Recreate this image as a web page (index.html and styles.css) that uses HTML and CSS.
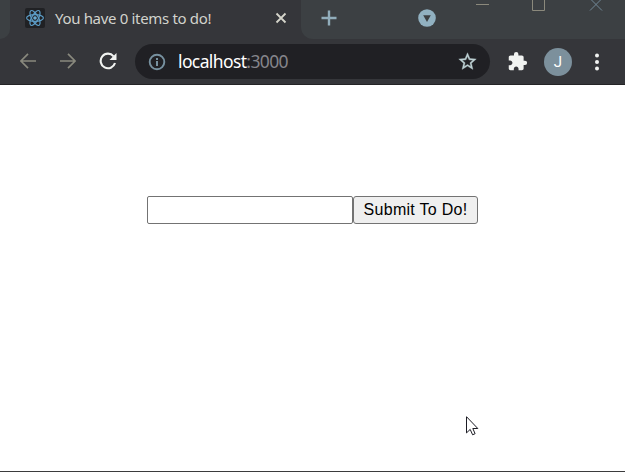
FILE: index.html
```html
<!DOCTYPE html>
<html lang="en">
<head>
<meta charset="utf-8">
<title>You have 0 items to do!</title>
<link rel="stylesheet" href="styles.css">
</head>
<body>
<div class="window">
  <header class="strip">
    <div class="strip-left"></div>
    <div class="tab">
      <svg class="favicon" width="20" height="20" viewBox="0 0 20 20">
        <rect width="20" height="20" rx="2" fill="#202124"/>
        <g fill="none" stroke="#5c9dc7" stroke-width="1.2">
          <ellipse cx="10" cy="10" rx="8.4" ry="3.3"/>
          <ellipse cx="10" cy="10" rx="8.4" ry="3.3" transform="rotate(60 10 10)"/>
          <ellipse cx="10" cy="10" rx="8.4" ry="3.3" transform="rotate(120 10 10)"/>
        </g>
        <circle cx="10" cy="10" r="1.8" fill="#68a9d0"/>
      </svg>
      <span class="tab-title">You have 0 items to do!</span>
      <svg class="tab-close" width="12" height="12" viewBox="0 0 12 12"><path d="M1.5 1.5l9 9M10.5 1.5l-9 9" stroke="#d5d5cb" stroke-width="1.8"/></svg>
    </div>
    <div class="strip-right">
      <svg class="plus" width="16" height="16" viewBox="0 0 16 16"><path d="M8 .5v15M.5 8h15" stroke="#91adbb" stroke-width="2.4"/></svg>
      <svg class="search" width="18" height="18" viewBox="0 0 18 18"><circle cx="9" cy="9" r="8.8" fill="#91b1c1"/><path d="M5.2 6.2h7.6L9 12.9z" fill="#3c4043"/></svg>
      <svg class="controls" width="128" height="12" viewBox="0 0 128 12" fill="none">
        <path d="M0 4.5h13" stroke="#8b897c"/>
        <path d="M56.500 -1.500h12v12h-12z" stroke="#8b897c"/>
        <path d="M114 -1.500l12 12M126 -1.500l-12 12" stroke="#708797"/>
      </svg>
    </div>
  </header>
  <nav class="toolbar">
    <svg class="back" width="16" height="16" viewBox="0 0 16 16"><path d="M16 8H1.200M8 .800L.900 8 8 15.200" fill="none" stroke="#89897d" stroke-width="1.700"/></svg>
    <svg class="forward" width="16" height="16" viewBox="0 0 16 16"><path d="M0 8h14.800M8 .800L15.100 8 8 15.200" fill="none" stroke="#89897d" stroke-width="1.700"/></svg>
    <svg class="reload" width="18" height="18" viewBox="0 0 18 18"><path d="M14.600 4.300A7.300 7.300 0 1 0 16 11" fill="none" stroke="#f1f3f1" stroke-width="2.100"/><path d="M17.500 1v7h-7z" fill="#f1f3f1"/></svg>
    <div class="omnibox">
      <svg class="info" width="18" height="18" viewBox="0 0 18 18"><circle cx="9" cy="9" r="7.300" fill="none" stroke="#7791a0" stroke-width="1.900"/><path d="M9 8v5M9 5v2" stroke="#7791a0" stroke-width="2"/></svg>
      <span class="url"><span class="host">localhost</span><span class="port">:3000</span></span>
      <svg class="star" width="21" height="21" viewBox="0 0 24 24"><path d="M22 9.240l-7.190-.620L12 2 9.190 8.630 2 9.240l5.460 4.730L5.820 21 12 17.270 18.180 21l-1.630-7.030L22 9.240zM12 15.400l-3.760 2.270 1-4.280-3.320-2.880 4.380-.380L12 6.100l1.710 4.040 4.380.380-3.320 2.880 1 4.280L12 15.400z" fill="#bdd0d3" stroke="#bdd0d3" stroke-width=".4"/></svg>
    </div>
    <svg class="puzzle" width="21" height="21" viewBox="0 0 24 24"><path d="M20.500 11H19V7c0-1.100-.900-2-2-2h-4V3.500a2.500 2.500 0 0 0-5 0V5H4c-1.100 0-1.990.900-1.990 2v3.800H3.500c1.490 0 2.700 1.210 2.700 2.700s-1.210 2.700-2.700 2.700H2V20c0 1.100.900 2 2 2h3.800v-1.500c0-1.490 1.210-2.700 2.700-2.700s2.700 1.210 2.700 2.700V22H17c1.100 0 2-.900 2-2v-4h1.500a2.500 2.500 0 0 0 0-5z" fill="#f1f3f1"/></svg>
    <span class="avatar">J</span>
    <svg class="dots" width="4" height="18" viewBox="0 0 4 18" fill="#f1f3f1"><circle cx="2" cy="2.500" r="2"/><circle cx="2" cy="9" r="2"/><circle cx="2" cy="15.500" r="2"/></svg>
  </nav>
  <main class="page">
    <form class="todo">
      <input class="field" type="text" aria-label="To do">
      <button class="submit" type="button">Submit To Do!</button>
    </form>
  </main>
</div>
<svg class="cursor" width="13" height="20" viewBox="0 0 13 20"><path d="M.5 .7v16.200l3.700-3.500 2.400 5.400 2.500-1.100-2.300-5.200h5z" fill="#fff" stroke="#1c1c24" stroke-width="1"/></svg>
</body>
</html>
```
FILE: styles.css
```css
* { box-sizing: border-box; }
body { margin: 0; background: #fff; overflow: hidden; }
svg { display: block; flex: none; }
.window { height: 472px; display: flex; flex-direction: column; border-bottom: 1px solid #3b3b3d; }
.strip { height: 39px; display: flex; flex: none; background: #35363a; }
.strip-left { width: 10px; background: #3c4043; border-bottom-right-radius: 10px; }
.tab { width: 291px; height: 36px; display: flex; align-items: center; padding: 0 14px 0 15px; }
.tab-title { flex: 1; margin-left: 10px; padding-bottom: 1px; font: 15px/20px "Noto Sans", sans-serif; letter-spacing: -.33px; color: #d2d3cd; white-space: nowrap; }
.strip-right { flex: 1; display: flex; align-items: flex-start; background: #3c4043; border-bottom-left-radius: 12px; }
.plus { margin: 10px 0 0 20px; }
.search { margin: 9px 0 0 81px; }
.controls { margin-left: 40px; }
.toolbar { height: 46px; flex: none; display: flex; align-items: center; background: #35363a; border-bottom: 1px solid #242426; padding-left: 20px; }
.back, .forward, .reload { margin-bottom: 1px; }
.forward { margin-left: 24px; }
.reload { margin-left: 23px; }
.omnibox { width: 355px; height: 35px; margin-left: 18px; display: flex; align-items: center; border-radius: 18px; background: #202024; padding: 0 12px 0 13px; }
.url { flex: 1; margin-left: 12px; padding-bottom: 1px; font: 17.5px/24px "Noto Sans", sans-serif; letter-spacing: -.62px; white-space: nowrap; }
.host { color: #fff; }
.port { color: #85858b; }
.puzzle { margin-left: 17px; }
.avatar { width: 28px; height: 28px; margin-left: 16px; border-radius: 50%; background: #7c909c; color: #fff; font: 15px/28px Roboto, sans-serif; text-align: center; }
.dots { margin-left: 23px; }
.page { flex: 1; display: flex; justify-content: center; align-items: flex-start; padding-top: 111px; }
.todo { display: flex; margin: 0; }
.field { width: 206px; height: 28px; border: 1px solid #737373; border-radius: 2px; background: #fff; padding: 1px 2px; font: 16px "Liberation Sans", sans-serif; }
.submit { width: 125px; height: 28px; border: 1px solid #737373; border-radius: 3px; background: #efefef; color: #000; padding: 0; font: 16px/24px "Liberation Sans", sans-serif; letter-spacing: .28px; }
.cursor { position: absolute; left: 466px; top: 416px; }
```
